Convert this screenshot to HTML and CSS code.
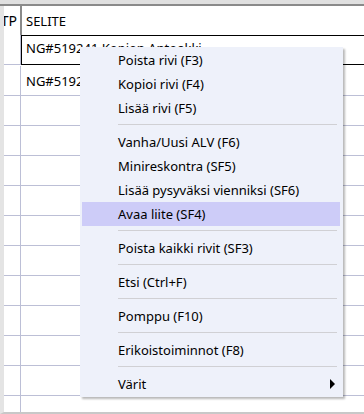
FILE: index.html
```html
<!DOCTYPE html>
<html lang="fi">
<head>
    <meta charset="UTF-8" />
    <title>Vientirivit</title>
    <link rel="stylesheet" href="styles.css">
</head>
<body>

    <!-- Grid -->
    <div class="sheet">
        <div class="top-band"></div>
        <div class="grid">
            <div class="row header-row">
                <div class="cell col-tp"><span>TP</span></div>
                <div class="cell col-selite">SELITE</div>
            </div>
            <div class="row selected-row">
                <div class="cell col-tp"></div>
                <div class="cell col-selite">NG#519241 Kopion Antoakki</div>
            </div>
            <div class="row">
                <div class="cell col-tp"></div>
                <div class="cell col-selite">NG#519241 Kopion Antoakki</div>
            </div>
            <div class="row"><div class="cell col-tp"></div><div class="cell col-selite"></div></div>
            <div class="row"><div class="cell col-tp"></div><div class="cell col-selite"></div></div>
            <div class="row"><div class="cell col-tp"></div><div class="cell col-selite"></div></div>
            <div class="row"><div class="cell col-tp"></div><div class="cell col-selite"></div></div>
            <div class="row"><div class="cell col-tp"></div><div class="cell col-selite"></div></div>
            <div class="row"><div class="cell col-tp"></div><div class="cell col-selite"></div></div>
            <div class="row"><div class="cell col-tp"></div><div class="cell col-selite"></div></div>
            <div class="row"><div class="cell col-tp"></div><div class="cell col-selite"></div></div>
            <div class="row"><div class="cell col-tp"></div><div class="cell col-selite"></div></div>
            <div class="row"><div class="cell col-tp"></div><div class="cell col-selite"></div></div>
            <div class="row last-row"><div class="cell col-tp"></div><div class="cell col-selite"></div></div>
        </div>
    </div>

    <!-- Context menu -->
    <ul class="context-menu">
        <li class="menu-item">Poista rivi (F3)</li>
        <li class="menu-item">Kopioi rivi (F4)</li>
        <li class="menu-item">Lisää rivi (F5)</li>
        <li class="menu-sep"></li>
        <li class="menu-item">Vanha/Uusi ALV (F6)</li>
        <li class="menu-item">Minireskontra (SF5)</li>
        <li class="menu-item">Lisää pysyväksi vienniksi (SF6)</li>
        <li class="menu-item active">Avaa liite (SF4)</li>
        <li class="menu-sep"></li>
        <li class="menu-item">Poista kaikki rivit (SF3)</li>
        <li class="menu-sep"></li>
        <li class="menu-item">Etsi (Ctrl+F)</li>
        <li class="menu-sep"></li>
        <li class="menu-item">Pomppu (F10)</li>
        <li class="menu-sep"></li>
        <li class="menu-item">Erikoistoiminnot (F8)</li>
        <li class="menu-sep"></li>
        <li class="menu-item has-sub">Värit <span class="sub-arrow"></span></li>
    </ul>

</body>
</html>
```

FILE: styles.css
```css
* {
    margin: 0;
    padding: 0;
    box-sizing: border-box;
}

body {
    font-family: 'Noto Sans', 'Open Sans', sans-serif;
    font-size: 13px;
    color: #000;
    background: #fff;
    width: 364px;
    height: 414px;
    overflow: hidden;
    position: relative;
}

/* Grid */
.sheet {
    height: 414px;
    display: flex;
    flex-direction: column;
    border-left: 4px solid #e4e4e4;
    border-bottom: 2px solid #c8c8c8;
}

.top-band {
    height: 6px;
    background: #e0e0e0;
    border-bottom: 2px solid #8a8a8a;
    margin-left: -4px;
    flex-shrink: 0;
}

.grid {
    flex: 1;
    overflow: hidden;
}

.row {
    display: flex;
    height: 30px;
    border-bottom: 1px solid #bcbfd6;
}

.cell {
    display: flex;
    align-items: center;
    white-space: nowrap;
    overflow: hidden;
}

.col-tp {
    width: 17px;
    border-right: 1px solid #bcbfd6;
    justify-content: flex-end;
}

.col-selite {
    flex: 1;
    padding-left: 5px;
}

.header-row {
    height: 29px;
    border-bottom: none;
}

.header-row .col-tp {
    width: 18px;
    border-right: 2px solid #8a8a8a;
    padding-right: 3px;
    font-size: 14px;
}

.header-row .col-tp span {
    flex-shrink: 0;
}

.header-row .col-selite {
    padding-left: 4px;
}

.selected-row {
    border-bottom: none;
    margin-bottom: 1px;
}

.selected-row .col-selite {
    border: 1px solid #000;
    border-right: none;
    padding-left: 4px;
    align-items: flex-start;
    padding-top: 3px;
}

.selected-row .col-tp {
    border-bottom: 1px solid #bcbfd6;
}

.last-row {
    border-bottom: none;
    flex: 1;
}

/* Context menu */
.context-menu {
    position: absolute;
    left: 80px;
    top: 47px;
    width: 263px;
    list-style: none;
    background: #eef1fa;
    padding: 1px 3px 1px 2px;
    box-shadow: 2px 2px 2px rgba(0, 0, 0, 0.28);
}

.menu-item {
    height: 24px;
    line-height: 24px;
    padding-left: 36px;
    position: relative;
}

.menu-item.active {
    background: #cdccf8;
}

.menu-sep {
    height: 10px;
    position: relative;
}

.menu-sep::after {
    content: "";
    position: absolute;
    left: 36px;
    right: 3px;
    top: 4px;
    border-top: 1px solid #d0d0d4;
}

.sub-arrow {
    position: absolute;
    right: 5px;
    top: 7px;
    width: 0;
    height: 0;
    border-top: 5px solid transparent;
    border-bottom: 5px solid transparent;
    border-left: 5px solid #000;
}
```
